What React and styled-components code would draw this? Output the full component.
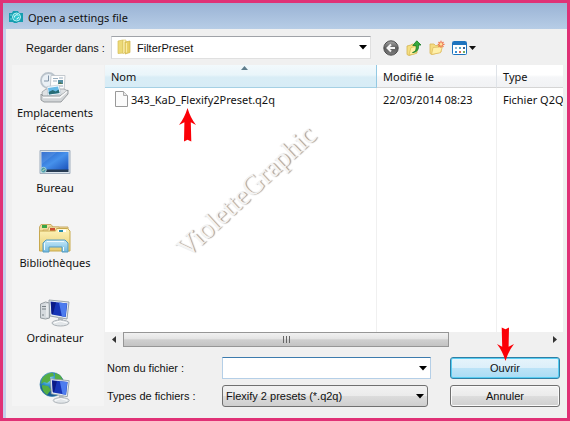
import React from "react";
import styled, { createGlobalStyle, css } from "styled-components";

const GlobalStyle = createGlobalStyle`
  *, *::before, *::after { box-sizing: border-box; }
  body { margin: 0; background: #f0f0f0; color: #111; }
  button, input, select { font: inherit; color: inherit; }
`;

const humanist = css`font-family: "Noto Sans", "Open Sans", sans-serif;`;
const grotesque = css`font-family: "Liberation Sans", Arial, sans-serif;`;

const Dialog = styled.main`
  min-height: 100vh;
  display: flex;
  flex-direction: column;
  border: 3px solid #e03176;
  background: #f0f0f0;
  font-size: 11px;
  ${grotesque}
`;

const TitleBar = styled.header`
  height: 26px;
  display: flex;
  align-items: center;
  gap: 5px;
  padding: 2px 6px 0;
  background: linear-gradient(#9ab3d5, #b7cde6);
`;

const Title = styled.h1`
  margin: 0;
  font-size: 11px;
  font-weight: 400;
  ${humanist}
`;

const Body = styled.div`
  flex: 1;
  display: flex;
  flex-direction: column;
  border-left: 3px solid #c5cfec;
`;

const Toolbar = styled.div`
  height: 36px;
  display: grid;
  grid-template-columns: 85px 1fr 196px;
  padding: 7px 0 6px 20px;
`;

const FieldLabel = styled.label`
  align-self: center;
  white-space: nowrap;
`;

const Combo = styled.div`
  position: relative;
  display: flex;
  min-width: 0;
  height: 100%;
  margin-right: ${(p) => p.$inset || 0}px;
`;

const ComboSelect = styled.select`
  appearance: none;
  width: 100%;
  padding: 0 20px 0 ${(p) => (p.$flat ? 25 : 3)}px;
  outline-offset: -2px;
  ${(p) =>
    p.$flat
      ? css`
          background: #fff;
          border: 1px solid #e0e0e0;
          border-top-color: #a0a3a8;
          border-left-color: #d3d6da;
        `
      : css`
          background: linear-gradient(#f2f2f2 0%, #ebebeb 48%, #dcdcdc 50%, #cfcfcf 100%);
          border: 1px solid #707070;
          border-radius: 3px;
        `}
`;

const FileInput = styled.input`
  width: 100%;
  padding: 0 20px 0 4px;
  background: #fff;
  border: 1px solid #b5cfe7;
  border-top-color: #3d7bad;
  border-radius: 0;
  outline: none;
`;

const ComboIcon = styled.span`
  position: absolute;
  left: 6px;
  top: 3px;
  display: flex;
  pointer-events: none;
`;

const ComboArrow = styled.span`
  position: absolute;
  right: 4px;
  top: 0;
  bottom: 0;
  display: flex;
  align-items: center;
  pointer-events: none;
`;

const Tools = styled.div`
  display: flex;
  align-items: center;
  gap: 7px;
  padding-left: 12px;
`;

const ToolButton = styled.button`
  display: flex;
  align-items: center;
  padding: 0;
  border: 0;
  background: none;
`;

const Content = styled.div`
  flex: 1;
  display: grid;
  grid-template-columns: 92px 1fr;
  gap: 1px;
  padding: 0 4px 0 6px;
`;

const Places = styled.nav`
  padding-top: 7px;
  margin-bottom: 12px;
  display: flex;
  flex-direction: column;
  background: #f4f4f4;
  ${humanist}
`;

const Place = styled.button`
  min-height: ${(p) => (p.$short ? 33 : 75)}px;
  display: flex;
  flex-direction: column;
  align-items: center;
  gap: 1px;
  padding: 0 6px 0 0;
  border: 0;
  background: none;
  line-height: 15px;
  svg { flex: none; }
`;

const Main = styled.section`
  min-width: 0;
  display: flex;
  flex-direction: column;
`;

const FileArea = styled.div`
  position: relative;
  flex: 1;
  min-height: 267px;
  background: #fff;
  overflow: hidden;
`;

const FileTable = styled.table`
  width: 100%;
  height: 267px;
  table-layout: fixed;
  border-collapse: separate;
  border-spacing: 0;
  ${humanist}
`;

const HeadCell = styled.th`
  position: relative;
  width: ${(p) => p.$width || "auto"};
  height: 23px;
  padding: 1px 6px 0;
  text-align: left;
  font-weight: 400;
  border-right: 1px solid ${(p) => (p.$sorted ? "#93c9e3" : "#dfe3e8")};
  border-bottom: 1px solid ${(p) => (p.$sorted ? "#a5d0e4" : "#d5d5d5")};
  background: ${(p) =>
    p.$sorted
      ? "linear-gradient(#f2f9fc 0%, #e9f5fa 45%, #d9edf6 55%, #d7ecf6 100%)"
      : "linear-gradient(#ffffff 0%, #ffffff 45%, #f5f6f8 55%, #f1f2f4 100%)"};
  &:last-child { border-right: 0; }
`;

const SortMark = styled.span`
  position: absolute;
  left: 50%;
  top: 1px;
  display: flex;
`;

const Cell = styled.td`
  height: ${(p) => (p.$fill ? "auto" : "22px")};
  padding: 0 0 0 6px;
  white-space: nowrap;
  overflow: hidden;
  border-right: 1px solid #f0f0f0;
  &:last-child { border-right: 0; }
`;

const FileName = styled.span`
  display: flex;
  align-items: center;
  gap: 3px;
  padding-left: 4px;
`;

const Watermark = styled.div`
  position: absolute;
  left: 50px;
  top: 107px;
  width: 192px;
  font: 28px/30px "Liberation Serif", serif;
  white-space: nowrap;
  color: #f4f4f4;
  text-shadow: 1px 1px 1px #999;
  transform: rotate(-43deg);
  pointer-events: none;
`;

const Pointer = styled.span`
  position: absolute;
  display: flex;
  pointer-events: none;
  left: ${(p) => p.$left}px;
  top: ${(p) => p.$top}px;
`;

const Scrollbar = styled.div`
  height: 15px;
  display: grid;
  grid-template-columns: 18px 1fr 114px;
  background: #f0f0f0;
`;

const ScrollButton = styled.button`
  display: flex;
  align-items: center;
  justify-content: ${(p) => (p.$end ? "flex-end" : "center")};
  padding: 0 ${(p) => (p.$end ? 6 : 0)}px 0 0;
  border: 0;
  background: none;
`;

const Thumb = styled.div`
  display: flex;
  align-items: center;
  justify-content: center;
  border: 1px solid #969696;
  background: linear-gradient(#f1f1f1 0%, #e4e4e4 45%, #cfcfcf 52%, #c3c3c3 100%);
`;

const Form = styled.form`
  display: grid;
  grid-template-columns: 115px 1fr 110px;
  grid-auto-rows: 22px;
  row-gap: 6px;
  padding: 10px 3px 11px 2px;
`;

const ButtonSlot = styled.div`
  position: relative;
  display: flex;
`;

const PushButton = styled.button`
  flex: 1;
  padding: 0;
  border-radius: 3px;
  ${(p) =>
    p.$primary
      ? css`
          border: 1px solid #2f7fa5;
          box-shadow: inset 0 0 0 1px #58cdf2;
          background: linear-gradient(#e6f4fb 0%, #dceffa 48%, #bce3f7 52%, #aadcf5 100%);
        `
      : css`
          border: 1px solid #707070;
          box-shadow: inset 0 0 0 1px #fafafa;
          background: linear-gradient(#f3f3f3 0%, #ebebeb 48%, #dddddd 52%, #cfcfcf 100%);
        `}
`;

const DownArrow = () => (
  <svg width="8" height="5" viewBox="0 0 8 5" aria-hidden="true">
    <path d="M0 0h8L4 4.6z" fill="#000" />
  </svg>
);

const RedArrow = ({ up }) => (
  <svg width="19" height="34" viewBox="0 0 19 34" aria-hidden="true">
    <path
      transform={up ? undefined : "rotate(180 9.5 17)"}
      d="M9.5 0Q12.500 10 18 17L12.800 14.300 13.300 33.500 9.500 31.800 6 33.500 6.400 14.300 1 17Q6.500 10 9.500 0z"
      fill="#fb0007"
    />
  </svg>
);

const AppIcon = () => (
  <svg width="14" height="13" viewBox="0 0 14 13" aria-hidden="true">
    <path d="M0 2h3l1-2h5l1 2h4v9H9l-1 1H5l-1-1H0z" fill="#159eb0" />
    <circle cx="7.5" cy="6" r="4" fill="#2fc3cf" stroke="#b9f1f3" />
    <path d="M5.6 6.5a2.2 2.2 0 0 1 3.8-2M9.5 6a2 2 0 0 1-2 2" fill="none" stroke="#eaffff" />
    <path d="M1 4h2M1 8h2" stroke="#73d5dc" />
  </svg>
);

const FolderIcon = () => (
  <svg width="15" height="16" viewBox="0 0 15 16" aria-hidden="true">
    <path d="M1 2l5-1v13l-5 .5z" fill="#edda78" stroke="#d5bd56" strokeWidth=".7" />
    <path d="M6 1h3v11l-3 3z" fill="#fff4b6" stroke="#d9c463" strokeWidth=".6" />
    <path d="M8 3l5-1v11.5L8 15z" fill="#e8cf63" stroke="#cfb34a" strokeWidth=".7" />
    <path d="M9.5 4v9.5" stroke="#f9eba4" strokeWidth="1.2" />
  </svg>
);

const BackIcon = () => (
  <svg width="16" height="16" viewBox="0 0 16 16" aria-hidden="true">
    <defs>
      <linearGradient id="backFill" x2="0" y2="1">
        <stop stopColor="#a6a6a6" /><stop offset=".5" stopColor="#5d5d5d" /><stop offset="1" stopColor="#7e7e7e" />
      </linearGradient>
    </defs>
    <circle cx="8" cy="8" r="7.2" fill="url(#backFill)" stroke="#4e4e4e" />
    <path d="M12 8H4.8M8 4.5 4.5 8 8 11.5" stroke="#f4f4f4" strokeWidth="2" fill="none" />
  </svg>
);

const UpIcon = () => (
  <svg width="16" height="16" viewBox="0 0 16 16" aria-hidden="true">
    <path d="M1 6l4-1 1-1 5 1v8l-8 2.500-2-1z" fill="#f5df82" stroke="#d3b350" strokeWidth=".8" />
    <path d="M3 15 5 7.500l7-1.500-2 7.500z" fill="#fff0a5" stroke="#d7ba55" strokeWidth=".7" />
    <path d="M6.500 12.500C10 11.500 10.500 9 10 5.500H6.800L10.800.8 15 5h-2.500c.6 4-1.500 7.500-6 7.500z" fill="#37a93c" stroke="#187b26" strokeWidth=".8" />
  </svg>
);

const NewFolderIcon = () => (
  <svg width="16" height="16" viewBox="0 0 16 16" aria-hidden="true">
    <path d="M1 4h4l1.500 1.500H12V12l-9 2.500-2-1z" fill="#f5dc80" stroke="#d9b557" strokeWidth=".8" />
    <path d="M2.500 14.500 4 7.500l9.500-.8-2 6z" fill="#fff0a9" stroke="#dfbd62" strokeWidth=".8" />
    <path d="M12 .8v7M8.700 4.300h6.800M9.500 2l5 4.800M14.500 2l-5 4.800" stroke="#ef764d" strokeWidth="1.200" />
    <circle cx="12" cy="4.300" r="1.400" fill="#ffe3a0" />
  </svg>
);

const ViewIcon = () => (
  <svg width="24" height="16" viewBox="0 0 24 16" aria-hidden="true">
    <rect x=".5" y="1.500" width="14" height="13" rx="1" fill="#fff" stroke="#1d73be" />
    <path d="M1 2h13v3H1z" fill="#1d73be" />
    <path d="M3 7h2v2H3z" fill="#8fb8d6" /><path d="M7 7h2v2H7z" fill="#53a4c0" /><path d="M11 7h2v2h-2z" fill="#355f96" />
    <path d="M3 11h2v2H3z" fill="#3a8fd5" /><path d="M7 11h2v2H7z" fill="#d46d58" /><path d="M11 11h2v2h-2z" fill="#75ad62" />
    <path d="M17 6h7l-3.500 4z" fill="#111" />
  </svg>
);

const PageIcon = () => (
  <svg width="13" height="16" viewBox="0 0 13 16" aria-hidden="true">
    <path d="M.5.5h8l4 4v11H.5z" fill="#fbfbfb" stroke="#999" />
    <path d="M8.500.5v4h4" fill="#e7e7e7" stroke="#aaa" />
  </svg>
);

const RecentIcon = () => (
  <svg width="32" height="32" viewBox="0 0 32 32" aria-hidden="true">
    <circle cx="9.500" cy="8.500" r="7.500" fill="#eaf0f5" stroke="#bac3cb" strokeWidth="1.800" />
    <path d="M9.500 3.500v5.500H5" stroke="#8195a8" fill="none" />
    <path d="M12 3.500h14l-1 17H11z" fill="#fdfdfd" stroke="#b7bec4" strokeWidth=".8" />
    <path d="M14 6.500h5M14 9h4M20 6h4M20 14h4" stroke="#9aaebf" />
    <path d="M19 8h5v4h-5z" fill="#548fa5" /><path d="m19 12 2-2 3 2z" fill="#527854" />
    <path d="m3 20 4-3h18l4 2-6 8H4z" fill="#dfe2e4" stroke="#999ea2" strokeWidth=".8" />
    <path d="M8 14.500 20 13l2 9-13 2z" fill="#f6fbff" stroke="#b2bdc7" strokeWidth=".6" />
    <path d="m9 16 10-1.500 1.500 6.500-10.500 1.500z" fill="#68bae7" /><path d="m9.700 20 4-2 3 1.500 3-2 .8 3.500-10.500 1.500z" fill="#286d76" />
    <path d="m2 22 2 2h17l8-6v4l-7 8H5l-3-2z" fill="#d2d5d7" stroke="#909497" strokeWidth=".9" />
    <path d="M4 25.500h17l7-6" stroke="#fafafa" fill="none" strokeWidth="1.600" />
  </svg>
);

const DesktopIcon = () => (
  <svg width="32" height="32" viewBox="0 0 32 32" aria-hidden="true">
    <defs>
      <linearGradient id="deskFill" x2="1" y2="1">
        <stop stopColor="#205ac2" /><stop offset=".5" stopColor="#4691eb" /><stop offset="1" stopColor="#1b51ba" />
      </linearGradient>
    </defs>
    <path d="M1 3.500h30v23H1z" fill="#dae4ee" stroke="#9fadbd" />
    <path d="M2.500 5h27v18h-27z" fill="url(#deskFill)" />
    <path d="M3 5h15L3 17z" fill="#82b8f3" opacity=".25" />
    <path d="M2.500 22.500h27V25h-27z" fill="#283c53" />
    <circle cx="4.500" cy="23" r="2.700" fill="#4c9aa9" stroke="#a7d4d8" />
    <path d="m3.500 24 2-2" stroke="#dceeb0" />
  </svg>
);

const LibraryIcon = () => (
  <svg width="34" height="32" viewBox="0 0 34 32" aria-hidden="true">
    <defs>
      <linearGradient id="libFill" x2="0" y2="1"><stop stopColor="#fff4bb" /><stop offset="1" stopColor="#e6cc70" /></linearGradient>
      <linearGradient id="standFill" x2="0" y2="1"><stop stopColor="#c7eafa" /><stop offset="1" stopColor="#72b9df" /></linearGradient>
    </defs>
    <path d="M1.500 5 3 2.500h10L15 5h15v5H1.500z" fill="#f1dda0" stroke="#c9ac66" />
    <path d="M4 3h5v3H4z" fill="#38a546" />
    <path d="M5 8h5l1-3h10l1 3h9v8H5z" fill="#fae9b3" stroke="#c7a65a" strokeWidth=".8" />
    <path d="M12 6h5v3h-5z" fill="#cd4e31" />
    <path d="M1.500 9h16l1-2.500h11L32 9v20H1.500z" fill="url(#libFill)" stroke="#c8a94e" />
    <path d="M20 7.500h8v2.500h-8z" fill="#fff" /><path d="M21 8h4v2h-4z" fill="#258ca9" />
    <path d="M8 18h19l3 3v9h-6v-5H11v5H5v-9z" fill="url(#standFill)" stroke="#549bc0" />
    <path d="M9 19.500h17M6.500 21v7M25.500 25v4" stroke="#effbff" />
  </svg>
);

const Monitor = () => (
  <g>
    <path d="m10 3 20 2-2 17-17-3z" fill="#e7edf1" stroke="#909ba3" strokeWidth=".9" />
    <path d="m11.500 4.500 16.800 2-1.600 13.500-14-2.500z" fill="#1735b7" />
    <path d="m20 5.500 8 1-1.600 13.500-3.500-.7z" fill="#4d7cee" />
    <path d="m12 5 5 .6-3 11.500-1.500-.3z" fill="#0b1a86" />
    <path d="m19 20 5 .8v4h-5z" fill="#afb7bc" />
    <ellipse cx="21.500" cy="26" rx="8.500" ry="3" fill="#e2e6e9" stroke="#aab0b5" />
    <path d="m15 26 6-2 7 2" fill="none" stroke="#fff" />
  </g>
);

const ComputerIcon = () => (
  <svg width="32" height="32" viewBox="0 0 32 32" aria-hidden="true">
    <path d="m1.500 7 5-2 4 1v15l-4 1-5-1z" fill="#d5dade" stroke="#969da2" />
    <path d="M3 9.500h4M3 12h4M3 18h2" stroke="#798186" /><path d="M8 7v13" stroke="#f8fafa" />
    <Monitor />
  </svg>
);

const NetworkIcon = () => (
  <svg width="32" height="32" viewBox="0 0 32 32" aria-hidden="true">
    <defs>
      <radialGradient id="globeFill" cx=".35" cy=".25"><stop stopColor="#aee9ff" /><stop offset=".55" stopColor="#3497cb" /><stop offset="1" stopColor="#155a95" /></radialGradient>
    </defs>
    <circle cx="13" cy="12.500" r="12" fill="url(#globeFill)" stroke="#3380a9" strokeWidth=".7" />
    <path d="M3 7c3-5 7-6 11-6l1 3-4 1 1 3-4 3-3-1-3 2zM16 1l5 2 3 5-5 2-3-3zM3 13l6 1 3 4-4 5c-4-3-5-6-5-10z" fill="#55ae43" />
    <g transform="translate(2 4) scale(.94)"><Monitor /></g>
  </svg>
);

const places = [
  { label: <>Emplacements<br />récents</>, Icon: RecentIcon },
  { label: "Bureau", Icon: DesktopIcon },
  { label: "Bibliothèques", Icon: LibraryIcon },
  { label: "Ordinateur", Icon: ComputerIcon },
];

const tools = [
  { name: "Précédent", Icon: BackIcon },
  { name: "Dossier parent", Icon: UpIcon },
  { name: "Nouveau dossier", Icon: NewFolderIcon },
  { name: "Affichage", Icon: ViewIcon },
];

export default function App() {
  return (
    <>
      <GlobalStyle />
      <Dialog>
        <TitleBar>
          <AppIcon />
          <Title>Open a settings file</Title>
        </TitleBar>
        <Body>
          <Toolbar>
            <FieldLabel htmlFor="folder">Regarder dans :</FieldLabel>
            <Combo>
              <ComboSelect id="folder" $flat>
                <option>FilterPreset</option>
              </ComboSelect>
              <ComboIcon><FolderIcon /></ComboIcon>
              <ComboArrow><DownArrow /></ComboArrow>
            </Combo>
            <Tools>
              {tools.map(({ name, Icon }) => (
                <ToolButton key={name} type="button" aria-label={name}><Icon /></ToolButton>
              ))}
            </Tools>
          </Toolbar>
          <Content>
            <Places>
              {places.map(({ label, Icon }, i) => (
                <Place key={i} type="button"><Icon /><span>{label}</span></Place>
              ))}
              <Place type="button" $short aria-label="Réseau"><NetworkIcon /></Place>
            </Places>
            <Main>
              <FileArea>
                <FileTable>
                  <thead>
                    <tr>
                      <HeadCell $sorted aria-sort="ascending">
                        Nom
                        <SortMark>
                          <svg width="7" height="4" viewBox="0 0 7 4" aria-hidden="true"><path d="M0 4 3.500 0 7 4z" fill="#5f7d8c" /></svg>
                        </SortMark>
                      </HeadCell>
                      <HeadCell $width="120px">Modifié le</HeadCell>
                      <HeadCell $width="66px">Type</HeadCell>
                    </tr>
                  </thead>
                  <tbody>
                    <tr>
                      <Cell><FileName><PageIcon />343_KaD_Flexify2Preset.q2q</FileName></Cell>
                      <Cell>22/03/2014 08:23</Cell>
                      <Cell>Fichier Q2Q</Cell>
                    </tr>
                    <tr aria-hidden="true"><Cell $fill /><Cell $fill /><Cell $fill /></tr>
                  </tbody>
                </FileTable>
                <Watermark>VioletteGraphic</Watermark>
                <Pointer $left={73} $top={43}><RedArrow up /></Pointer>
              </FileArea>
              <Scrollbar>
                <ScrollButton type="button" aria-label="Défiler à gauche">
                  <svg width="4" height="7" viewBox="0 0 4 7"><path d="M4 0v7L0 3.500z" fill="#333" /></svg>
                </ScrollButton>
                <Thumb>
                  <svg width="9" height="7" viewBox="0 0 9 7"><path d="M1.500 0v7M4.500 0v7M7.500 0v7" stroke="#666" /></svg>
                </Thumb>
                <ScrollButton type="button" $end aria-label="Défiler à droite">
                  <svg width="4" height="7" viewBox="0 0 4 7"><path d="M0 0v7l4-3.500z" fill="#333" /></svg>
                </ScrollButton>
              </Scrollbar>
              <Form onSubmit={(e) => e.preventDefault()}>
                <FieldLabel htmlFor="filename">Nom du fichier :</FieldLabel>
                <Combo $inset={19}>
                  <FileInput id="filename" type="text" />
                  <ComboArrow><DownArrow /></ComboArrow>
                </Combo>
                <ButtonSlot>
                  <PushButton type="submit" $primary>Ouvrir</PushButton>
                  <Pointer $left={46} $top={-30}><RedArrow /></Pointer>
                </ButtonSlot>
                <FieldLabel htmlFor="filetype">Types de fichiers :</FieldLabel>
                <Combo $inset={22}>
                  <ComboSelect id="filetype">
                    <option>Flexify 2 presets (*.q2q)</option>
                  </ComboSelect>
                  <ComboArrow><DownArrow /></ComboArrow>
                </Combo>
                <ButtonSlot>
                  <PushButton type="button">Annuler</PushButton>
                </ButtonSlot>
              </Form>
            </Main>
          </Content>
        </Body>
      </Dialog>
    </>
  );
}
